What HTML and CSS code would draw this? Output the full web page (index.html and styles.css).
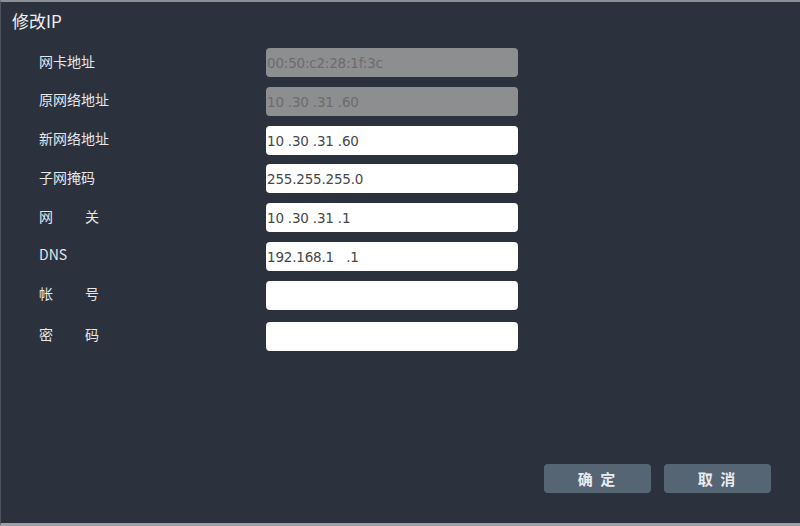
FILE: index.html
```html
<!DOCTYPE html>
<html lang="zh-CN">
<head>
  <meta charset="UTF-8" />
  <title>修改IP</title>
  <link rel="stylesheet" href="styles.css">
</head>
<body>
  <div class="dialog">
    <h1>修改IP</h1>

    <!-- form rows -->
    <div class="form">
      <div class="row">
        <span class="label">网卡地址</span>
        <div class="field disabled">00:50:c2:28:1f:3c</div>
      </div>
      <div class="row">
        <span class="label">原网络地址</span>
        <div class="field disabled">10 .30 .31 .60</div>
      </div>
      <div class="row">
        <span class="label">新网络地址</span>
        <div class="field">10 .30 .31 .60</div>
      </div>
      <div class="row">
        <span class="label">子网掩码</span>
        <div class="field">255.255.255.0</div>
      </div>
      <div class="row">
        <span class="label spread"><span>网</span><span>关</span></span>
        <div class="field">10 .30 .31 .1</div>
      </div>
      <div class="row">
        <span class="label">DNS</span>
        <div class="field">192.168.1&nbsp;&nbsp;&nbsp;.1</div>
      </div>
      <div class="row">
        <span class="label spread"><span>帐</span><span>号</span></span>
        <div class="field"></div>
      </div>
      <div class="row last">
        <span class="label spread"><span>密</span><span>码</span></span>
        <div class="field"></div>
      </div>
    </div>

    <!-- buttons -->
    <div class="actions">
      <button class="btn">确&nbsp;定</button>
      <button class="btn">取&nbsp;消</button>
    </div>
  </div>
</body>
</html>
```

FILE: styles.css
```css
:root {
  --bg: #2b323d;
  --text: #e4e6ea;
  --field: #ffffff;
  --field-off: #8d8e8f;
  --btn: #566574;
}

html, body {
  margin: 0;
  height: 100%;
}

body {
  font-family: "Noto Sans CJK SC", "DejaVu Sans", sans-serif;
  background: var(--bg);
  color: var(--text);
}

.dialog {
  box-sizing: border-box;
  height: 526px;
  border-top: 2px solid #8a8f95;
  border-left: 1px solid #4c535d;
  border-bottom: 3px solid #9aa0a6;
  padding: 6px 0 0 0;
  display: flex;
  flex-direction: column;
}

h1 {
  margin: 0 0 0 11px;
  font-size: 17px;
  font-weight: normal;
  line-height: 26px;
  color: #eef0f2;
}

.form {
  display: flex;
  flex-direction: column;
  gap: 9.8px;
  margin-top: 14px;
  padding-left: 38px;
}

.row {
  display: flex;
  align-items: center;
  height: 29px;
}

.row.last {
  margin-top: 2px;
}

.label {
  width: 227px;
  padding-bottom: 4px;
  font-size: 14px;
  color: var(--text);
}

.label.spread {
  display: flex;
  justify-content: space-between;
  width: 60px;
  margin-right: 167px;
}

.field {
  box-sizing: border-box;
  width: 252px;
  height: 29px;
  background: var(--field);
  border-radius: 4px;
  padding: 0 1px;
  font-family: "DejaVu Sans", sans-serif;
  font-size: 13.5px;
  letter-spacing: -0.2px;
  line-height: 30px;
  color: #474747;
  white-space: pre;
}

.field.disabled {
  background: var(--field-off);
  color: #6c6c6c;
}

.actions {
  display: flex;
  gap: 13px;
  margin-top: auto;
  margin-bottom: 30px;
  padding-left: 543px;
}

.btn {
  width: 107px;
  height: 29px;
  border: none;
  border-radius: 4px;
  background: var(--btn);
  color: #e8ebee;
  font-family: "Noto Sans CJK SC", sans-serif;
  font-size: 15px;
  font-weight: bold;
  letter-spacing: 2px;
}
```
